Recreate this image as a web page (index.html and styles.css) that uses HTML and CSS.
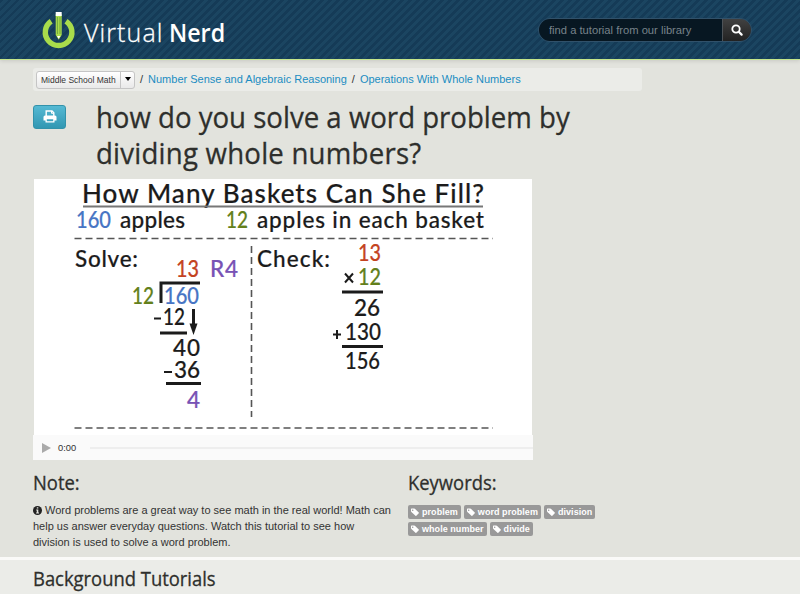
FILE: index.html
```html
<!DOCTYPE html>
<html lang="en">
<head>
    <meta charset="UTF-8">
    <meta name="viewport" content="width=device-width, initial-scale=1.0">
    <title>How Do You Solve a Word Problem by Dividing Whole Numbers? | Virtual Nerd</title>
    <link rel="stylesheet" href="styles.css">
</head>
<body>

<!-- Shared icons -->
<svg class="icon-defs" width="0" height="0">
    <symbol id="icon-tag" viewBox="0 0 16 16">
        <path fill="currentColor" fill-rule="evenodd" d="M0 2.2Q0 1 1.2 1H6.500Q7.500 1 8.300 1.800L15.500 9Q16.300 9.800 15.500 10.600L10.600 15.500Q9.800 16.300 9 15.500L.8 7.800Q0 7 0 6ZM3.400 2.800A1.500 1.500 0 1 0 3.400 5.800A1.500 1.500 0 1 0 3.400 2.800Z"/>
    </symbol>
</svg>

<header class="header">
    <a class="logo" href="#">
        <svg class="logo-mark" width="36" height="42" viewBox="0 0 36 42">
            <path d="M10.200 12.200A13.300 13.300 0 1 0 25 12.200" fill="none" stroke="#a9dc4b" stroke-width="5.400"/>
            <path d="M14 4.500H21.400V26L17.700 32L14 26Z" fill="#a9dc4b" stroke="#173f5c" stroke-width="1.400"/>
            <path d="M16.400 8V25M19 8V25" stroke="#73a83d" stroke-width="1"/>
            <path d="M14.700 3H20.700V7H14.700Z" fill="#fff"/>
            <path d="M16 27H19.400L17.700 29.800Z" fill="#fff"/>
        </svg>
        <span class="logo-virtual">Virtual</span><span class="logo-nerd">Nerd</span>
    </a>
    <form class="search">
        <input class="search-input" type="text" placeholder="find a tutorial from our library">
        <button class="search-button" type="button" aria-label="Search">
            <svg width="12" height="12" viewBox="0 0 12 12">
                <circle cx="5" cy="5" r="3.700" fill="none" stroke="#fff" stroke-width="1.800"/>
                <path d="M7.800 7.800L10.600 10.600" stroke="#fff" stroke-width="2.200" stroke-linecap="round"/>
            </svg>
        </button>
    </form>
</header>

<main class="main">
    <nav class="breadcrumb">
        <div class="dropdown">
            <span class="dropdown-label">Middle School Math</span>
            <span class="dropdown-toggle"><span class="caret"></span></span>
        </div>
        <span class="divider">/</span>
        <a class="crumb" href="#">Number Sense and Algebraic Reasoning</a>
        <span class="divider">/</span>
        <a class="crumb" href="#">Operations With Whole Numbers</a>
    </nav>

    <div class="title-row">
        <button class="print-button" type="button" aria-label="Print">
            <svg width="14" height="13" viewBox="0 0 14 13">
                <path d="M3.200 6V1H9L10.800 2.800V6" fill="none" stroke="#fff" stroke-width="1.400"/>
                <path d="M8.500 1V3.300H10.800" fill="none" stroke="#fff" stroke-width="1"/>
                <path fill="#fff" fill-rule="evenodd" d="M2 5.500H12Q13.500 5.500 13.500 7V10.500H11.500V12.500H2.500V10.500H.5V7Q.5 5.500 2 5.500ZM3.800 9.200V11.200H10.200V9.200Z"/>
            </svg>
        </button>
        <h1>how do you solve a word problem by<br><span class="second-line">dividing whole numbers?</span></h1>
    </div>

    <div class="player">
        <svg class="slide" width="500" height="256" viewBox="0 0 500 256">
            <rect x="1" y="0" width="498" height="256" fill="#fff"/>
            <g class="slide-title">
                <text x="49" y="24" textLength="402">How Many Baskets Can She Fill?</text>
            </g>
            <path class="underline" d="M50 27.500H450"/>
            <g class="slide-text">
                <text class="blue" x="43" y="49" textLength="35" lengthAdjust="spacingAndGlyphs">160</text>
                <text x="87" y="49" textLength="65">apples</text>
                <text class="green" x="193" y="49" textLength="22" lengthAdjust="spacingAndGlyphs">12</text>
                <text x="224" y="49" textLength="227">apples in each basket</text>
                <text x="42" y="88" textLength="63">Solve:</text>
                <text x="224" y="88" textLength="73">Check:</text>
            </g>
            <path class="dashes" d="M41.500 59.500H460M41.500 249H460M218.500 67V238"/>

            <!-- Long division -->
            <g class="slide-text">
                <text class="red" x="143" y="98" textLength="23" lengthAdjust="spacingAndGlyphs">13</text>
                <text class="purple" x="177" y="98" textLength="28">R4</text>
                <text class="green" x="99" y="125" textLength="22" lengthAdjust="spacingAndGlyphs">12</text>
                <text class="blue" x="131" y="125" textLength="35" lengthAdjust="spacingAndGlyphs">160</text>
                <text x="130" y="146" textLength="22" lengthAdjust="spacingAndGlyphs">12</text>
                <text x="140" y="177" textLength="27">40</text>
                <text x="141" y="199" textLength="26">36</text>
                <text class="purple" x="154" y="229">4</text>
            </g>
            <path class="rule" d="M128 124V104H167M127 154H154M133 204.500H168"/>
            <path class="thin" d="M121 139.500H128M131 193H139"/>
            <path class="rule" d="M160.500 130V147"/>
            <path d="M156.500 144.500H164.500L160.500 156Z"/>

            <!-- Multiplication check -->
            <g class="slide-text">
                <text class="red" x="325" y="82" textLength="23" lengthAdjust="spacingAndGlyphs">13</text>
                <text class="green" x="325" y="106" textLength="23" lengthAdjust="spacingAndGlyphs">12</text>
                <text x="321" y="137" textLength="26">26</text>
                <text x="312" y="161" textLength="36" lengthAdjust="spacingAndGlyphs">130</text>
                <text x="312" y="190" textLength="35" lengthAdjust="spacingAndGlyphs">156</text>
            </g>
            <path class="rule" d="M309 113H350M309 167.500H350"/>
            <path class="thin" d="M312 94.500L320 103.500M320 94.500L312 103.500M300 155.500H308M304 151V160"/>
        </svg>
        <div class="controls">
            <span class="play"></span>
            <span class="time">0:00</span>
            <span class="scrubber"></span>
        </div>
    </div>

    <div class="details">
        <section class="note">
            <h2>Note:</h2>
            <p><svg class="info" width="9" height="9" viewBox="0 0 9 9"><circle cx="4.500" cy="4.500" r="4.500" fill="#222"/><path d="M3.800 1.300H5.300V2.500H3.800ZM3.200 3.500H5.300V6.500H6V7.500H3.100V6.500H3.800V4.400H3.200Z" fill="#e2e3dd"/></svg> Word problems are a great way to see math in the real world! Math can<br>
            help us answer everyday questions. Watch this tutorial to see how<br>
            division is used to solve a word problem.</p>
        </section>
        <section class="keywords">
            <h2>Keywords:</h2>
            <div class="tags">
                <a class="tag" href="#"><svg width="8" height="8"><use href="#icon-tag"/></svg>problem</a>
                <a class="tag" href="#"><svg width="8" height="8"><use href="#icon-tag"/></svg>word problem</a>
                <a class="tag" href="#"><svg width="8" height="8"><use href="#icon-tag"/></svg>division</a>
                <a class="tag" href="#"><svg width="8" height="8"><use href="#icon-tag"/></svg>whole number</a>
                <a class="tag" href="#"><svg width="8" height="8"><use href="#icon-tag"/></svg>divide</a>
            </div>
        </section>
    </div>
</main>

<section class="background">
    <h2>Background Tutorials</h2>
</section>

</body>
</html>
```
FILE: styles.css
```css
* {
    box-sizing: border-box;
}
body {
    margin: 0;
    height: 594px;
    overflow: hidden;
    font-family: "Liberation Sans", Arial, sans-serif;
    font-size: 11px;
    color: #333;
    background-color: #e2e3dd;
}
a {
    color: #1b8cc2;
    text-decoration: none;
}
h1, h2 {
    margin: 0;
    font-family: "Open Sans", sans-serif;
    font-weight: 400;
    color: #2e2f2c;
    white-space: nowrap;
    transform: scaleX(0.92);
    transform-origin: left;
    -webkit-text-stroke: 0.3px #2e2f2c;
}
.icon-defs {
    position: absolute;
}

/* Header */
.header {
    display: flex;
    justify-content: space-between;
    height: 60px;
    padding: 0 48px 0 41px;
    border-bottom: 1px solid #c5e58b;
    background: repeating-linear-gradient(135deg, #153b57 0, #153b57 2.8px, #1b4561 2.8px, #1b4561 5.66px) padding-box;
    box-shadow: 0 1px 4px rgba(0, 0, 0, 0.12);
}
.logo {
    display: flex;
    padding-top: 9px;
    color: #fff;
    font-family: "Open Sans", sans-serif;
    font-size: 25px;
    line-height: 46px;
}
.logo-mark {
    margin-right: 7px;
}
.logo-virtual {
    width: 85px;
    font-weight: 300;
    letter-spacing: 1.1px;
    -webkit-text-stroke: 0.3px #fff;
}
.logo-nerd {
    font-weight: 600;
    transform: scaleX(0.93);
    transform-origin: left;
}
.search {
    display: flex;
    width: 214px;
    height: 24px;
    margin-top: 18px;
    border: 1px solid #31516a;
    border-radius: 12px;
    overflow: hidden;
}
.search-input {
    width: 183px;
    padding: 0 0 0 10px;
    border: 0;
    background: #071722;
    color: #78838a;
    font: 11.2px "Liberation Sans", Arial, sans-serif;
}
.search-input::placeholder {
    color: #78838a;
}
.search-button {
    display: flex;
    flex: 1;
    align-items: center;
    justify-content: center;
    padding: 0;
    border: 0;
    border-left: 1px solid #4d5358;
    background: linear-gradient(#414141, #222);
}

/* Breadcrumb */
.main {
    padding: 8px 0 0 33px;
    height: 497px;
}
.breadcrumb {
    display: flex;
    align-items: center;
    width: 609px;
    height: 23px;
    padding-left: 3px;
    border-radius: 3px;
    background: #ebece8;
    white-space: nowrap;
}
.dropdown {
    display: flex;
    width: 99px;
    height: 18px;
    border: 1px solid #c5c5c5;
    border-radius: 3px;
    background: linear-gradient(#fff, #e9e9e9);
    font-size: 8.5px;
    line-height: 17px;
}
.dropdown-label {
    width: 83px;
    padding-left: 4px;
}
.dropdown-toggle {
    flex: 1;
    padding: 5px 0 0 4px;
    border-left: 1px solid #c5c5c5;
}
.caret {
    display: block;
    width: 0;
    border: 3px solid transparent;
    border-top: 4px solid #000;
    border-bottom: 0;
}
.divider {
    margin: 0 5px;
}
.divider, .crumb {
    padding-bottom: 2px;
}

/* Title */
.title-row {
    display: flex;
    height: 88px;
}
.print-button {
    width: 33px;
    height: 24px;
    margin: 14px 29px 0 0;
    padding: 2px 0 0;
    border: 1px solid #3292aa;
    border-radius: 3px;
    background: linear-gradient(#55b9d3, #3197b2);
}
h1 {
    padding: 8px 0 0 1px;
    font-size: 30px;
    line-height: 36px;
}
.second-line {
    letter-spacing: 0.25px;
}

/* Player */
.player {
    width: 500px;
    height: 281px;
}
.slide {
    display: block;
    overflow: visible;
    font-family: Lato, sans-serif;
    font-weight: 500;
    fill: #1b1b1b;
}
.slide text {
    color: #1b1b1b;
    fill: currentColor;
    stroke: currentColor;
    stroke-width: 0.2;
}
.slide-title {
    font-size: 26px;
}
.slide-text {
    font-size: 22.5px;
}
.underline, .dashes, .rule, .thin {
    fill: none;
    stroke: #1b1b1b;
    stroke-width: 2;
}
.underline {
    stroke: #777;
}
.dashes {
    stroke: #555;
    stroke-width: 1.6;
    stroke-dasharray: 7 4;
}
.rule {
    stroke-width: 3;
}
.slide .red {
    color: #c4431f;
}
.slide .green {
    color: #63801b;
}
.slide .blue {
    color: #4775c4;
}
.slide .purple {
    color: #7852b5;
}
.controls {
    display: flex;
    align-items: center;
    height: 25px;
    padding-left: 9px;
    background: #fafafa;
}
.play {
    border: 5px solid transparent;
    border-left: 9px solid #aaa;
    border-right: 0;
}
.time {
    width: 32px;
    margin-left: 7px;
    font-size: 9.3px;
}
.scrubber {
    flex: 1;
    height: 2px;
    background: #eee;
}

/* Note and keywords */
.details {
    display: flex;
    padding-top: 9px;
}
h2 {
    font-size: 20px;
    line-height: 28px;
}
.note {
    width: 375px;
}
.note p {
    margin: 6px 0 0;
    line-height: 15.8px;
    white-space: nowrap;
}
.info {
    vertical-align: -1px;
}
.tags {
    display: flex;
    flex-wrap: wrap;
    gap: 3px;
    width: 195px;
    padding-top: 8px;
}
.tag {
    display: flex;
    align-items: center;
    gap: 3px;
    height: 14px;
    padding: 0 3px;
    border-radius: 2px;
    background: #999;
    color: #fff;
    font-size: 9px;
    font-weight: bold;
    letter-spacing: 0.05px;
}
.background {
    height: 37px;
    padding: 5px 0 0 33px;
    border-top: 3px solid #fafaf8;
    background: #ebece8;
}
```
